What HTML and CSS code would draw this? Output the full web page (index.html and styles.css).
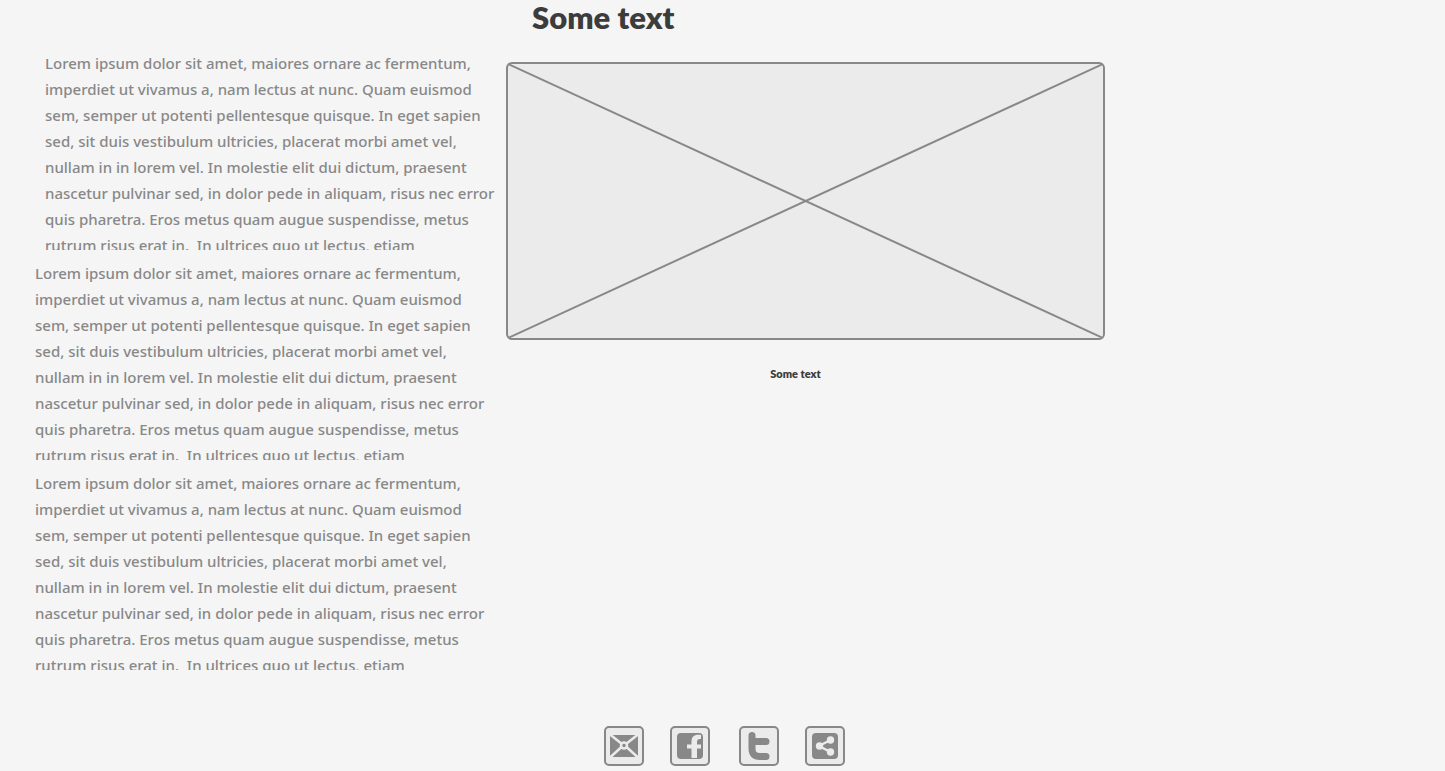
FILE: index.html
```
<!DOCTYPE html>
<html lang="en">
<head>
<meta charset="utf-8">
<meta name="viewport" content="width=device-width, initial-scale=1">
<title>Some text</title>
<link rel="stylesheet" href="styles.css">
</head>
<body class="page">
<main class="content">
<div class="articles">
<p class="article article-lead">Lorem ipsum dolor sit amet, maiores ornare ac fermentum,
imperdiet ut vivamus a, nam lectus at nunc. Quam euismod
sem, semper ut potenti pellentesque quisque. In eget sapien
sed, sit duis vestibulum ultricies, placerat morbi amet vel,
nullam in in lorem vel. In molestie elit dui dictum, praesent
nascetur pulvinar sed, in dolor pede in aliquam, risus nec error
quis pharetra. Eros metus quam augue suspendisse, metus
rutrum risus erat in.  In ultrices quo ut lectus, etiam</p>
<p class="article">Lorem ipsum dolor sit amet, maiores ornare ac fermentum,
imperdiet ut vivamus a, nam lectus at nunc. Quam euismod
sem, semper ut potenti pellentesque quisque. In eget sapien
sed, sit duis vestibulum ultricies, placerat morbi amet vel,
nullam in in lorem vel. In molestie elit dui dictum, praesent
nascetur pulvinar sed, in dolor pede in aliquam, risus nec error
quis pharetra. Eros metus quam augue suspendisse, metus
rutrum risus erat in.  In ultrices quo ut lectus, etiam</p>
<p class="article">Lorem ipsum dolor sit amet, maiores ornare ac fermentum,
imperdiet ut vivamus a, nam lectus at nunc. Quam euismod
sem, semper ut potenti pellentesque quisque. In eget sapien
sed, sit duis vestibulum ultricies, placerat morbi amet vel,
nullam in in lorem vel. In molestie elit dui dictum, praesent
nascetur pulvinar sed, in dolor pede in aliquam, risus nec error
quis pharetra. Eros metus quam augue suspendisse, metus
rutrum risus erat in.  In ultrices quo ut lectus, etiam</p>
</div>
<div class="feature">
<h1 class="title">Some text</h1>
<figure class="figure">
<div class="placeholder" role="img" aria-label="Image placeholder">
<svg class="cross" viewBox="0 0 595 274" preserveAspectRatio="none" aria-hidden="true"><path d="M0 0L595 274M595 0L0 274"/></svg>
</div>
<figcaption class="caption">Some text</figcaption>
</figure>
</div>
</main>
<footer class="social">
<a class="social-link" href="#mail" aria-label="Mail"><svg class="icon" viewBox="0 0 36 36" aria-hidden="true"><path class="ink" d="M4 7h28v22H4z"/><path class="line" d="M4 6.500l12 9.500M32 6.500L20 16M4 29.500L15.500 19M32 29.500L20.500 19"/><circle class="line" cx="18" cy="17.500" r="3"/></svg></a>
<a class="social-link" href="#facebook" aria-label="Facebook"><svg class="icon" viewBox="0 0 36 36" aria-hidden="true"><rect class="ink" x="5" y="5" width="26" height="26" rx="4"/><path class="paper" d="M29 7c-6.500-1-9.500 1.500-9.500 6.500v3H15v4h4.500V30H25v-9.500h4v-4h-4V14c0-2.500 1.500-3 4-3z"/></svg></a>
<a class="social-link social-split" href="#twitter" aria-label="Twitter"><svg class="icon" viewBox="0 0 36 36" aria-hidden="true"><path class="bird" d="M11 7.500V20c0 6 2.500 8.500 8 8.500h6M11 13.500h14"/></svg></a>
<a class="social-link" href="#share" aria-label="Share"><svg class="icon" viewBox="0 0 36 36" aria-hidden="true"><rect class="ink" x="5" y="5" width="26" height="26" rx="4"/><path class="line" d="M23.500 12l-11.500 6 11.500 6"/><circle class="paper" cx="12.500" cy="18" r="3.700"/><circle class="paper" cx="23.500" cy="12" r="3.700"/><circle class="paper" cx="23.500" cy="24" r="3.700"/></svg></a>
</footer>
</body>
</html>
```
FILE: styles.css
```
.page {
  margin: 0;
  background: #f5f5f5;
  color: #3c3c3c;
  font-family: "Noto Sans", "Open Sans", sans-serif;
}
.content {
  display: grid;
  grid-template-columns: 506fr 599fr 340fr;
}
.articles {
  display: flex;
  flex-direction: column;
  gap: 10px;
  padding: 50px 0 0 35px;
}
.article {
  height: 200px;
  margin: 0;
  overflow: hidden;
  color: #888;
  font-size: 15px;
  font-weight: 500;
  line-height: 26px;
  white-space: pre;
}
.article-lead {
  padding-left: 10px;
}
.title,
.caption {
  font-family: Lato, "Noto Sans", sans-serif;
  font-weight: 800;
}
.title {
  margin: 0 0 28px 26px;
  font-size: 31px;
  line-height: 34px;
}
.figure {
  margin: 0;
}
.placeholder {
  display: flex;
  border: 2px solid #888;
  border-radius: 6px;
  background: #ebebeb;
}
.cross {
  width: 100%;
  height: 274px;
  stroke: #888;
  stroke-width: 2;
}
.caption {
  margin: 26px 20px 0 0;
  font-size: 11px;
  line-height: 16px;
  text-align: center;
}
.social {
  display: flex;
  justify-content: center;
  gap: 26px;
  padding: 56px 0 4px 4px;
}
.social-link {
  display: flex;
  border: 2px solid #888;
  border-radius: 5px;
  background: #ebebeb;
}
.social-split {
  margin-left: 3px;
}
.icon {
  width: 36px;
  height: 36px;
}
.ink {
  fill: #888;
}
.paper {
  fill: #ebebeb;
}
.line {
  fill: none;
  stroke: #ebebeb;
  stroke-width: 2.5;
}
.bird {
  fill: none;
  stroke: #888;
  stroke-width: 7;
  stroke-linecap: round;
}
```
